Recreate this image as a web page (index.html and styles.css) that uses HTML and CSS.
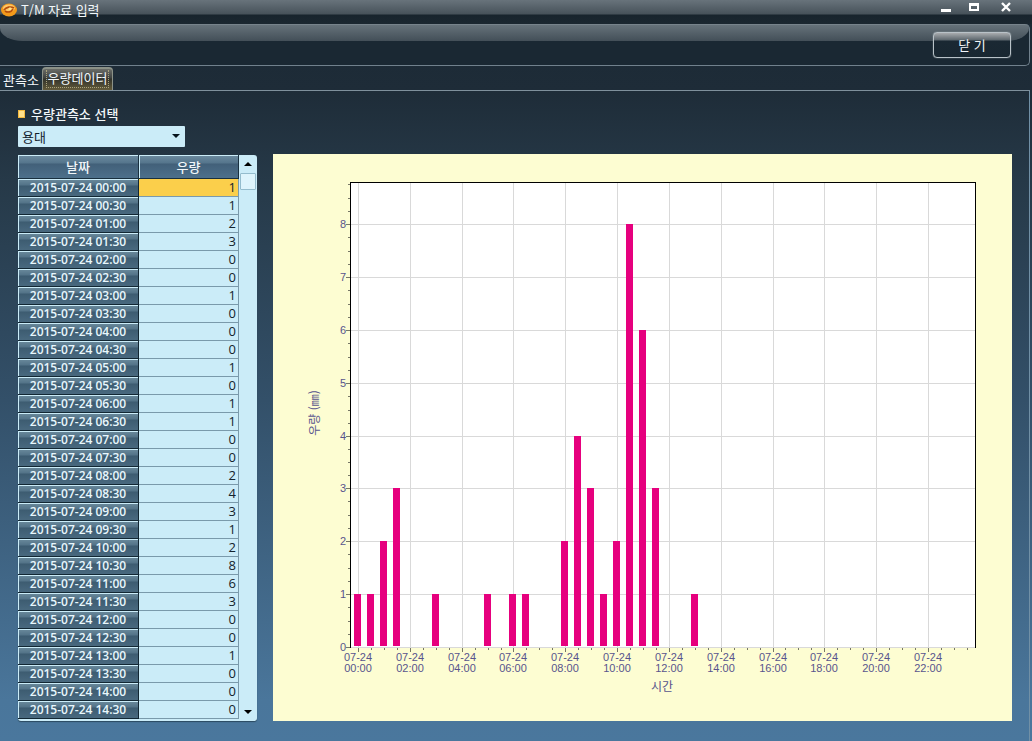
FILE: index.html
```html
<!DOCTYPE html>
<html lang="ko">
<head>
<meta charset="utf-8">
<title>T/M 자료 입력</title>
<link rel="stylesheet" href="styles.css">
</head>
<body>
<header class="titlebar">
  <svg class="logo" width="16" height="14" viewBox="0 0 16 14" aria-hidden="true">
    <ellipse cx="8" cy="7" rx="8" ry="6.5" fill="#f39a1b"/>
    <ellipse cx="8" cy="5" rx="6" ry="3.5" fill="#ffc867"/>
    <path d="M3 7c2-3 7-4 10-2M4 8c3 2 6 1 8-2" fill="none" stroke="#b54d0c" stroke-width="1.6"/>
    <circle cx="9" cy="6" r="1.4" fill="#ffe28a"/>
  </svg>
  <h1 class="title">T/M 자료 입력</h1>
  <div class="window-buttons">
    <button type="button" aria-label="최소화"><svg width="12" height="12" viewBox="0 0 12 12"><path d="M1 8h10v3H1z" fill="#fff"/></svg></button>
    <button type="button" aria-label="최대화"><svg width="12" height="12" viewBox="0 0 12 12"><path d="M1 2h10v8H1zM3 5v3h6V5z" fill="#fff" fill-rule="evenodd"/></svg></button>
    <button type="button" aria-label="창 닫기"><svg width="12" height="12" viewBox="0 0 12 12"><path d="M2 2l8 8M10 2l-8 8" stroke="#fff" stroke-width="2.4"/></svg></button>
  </div>
</header>
<div class="toolbar"><button type="button" class="close">닫 기</button></div>
<nav class="tabs" role="tablist">
  <button type="button" class="tab" role="tab" aria-selected="false">관측소</button>
  <button type="button" class="tab active" role="tab" aria-selected="true"><span>우량데이터</span></button>
</nav>
<main class="panel">
  <label class="caption" for="station">우량관측소 선택</label>
  <div class="station"><select id="station"><option>용대</option></select></div>
  <div class="content">
    <section class="grid">
      <table>
        <thead><tr><th scope="col">날짜</th><th scope="col">우량</th></tr></thead>
        <tbody>
          <tr class="selected"><th scope="row">2015-07-24 00:00</th><td>1</td></tr>
          <tr><th scope="row">2015-07-24 00:30</th><td>1</td></tr>
          <tr><th scope="row">2015-07-24 01:00</th><td>2</td></tr>
          <tr><th scope="row">2015-07-24 01:30</th><td>3</td></tr>
          <tr><th scope="row">2015-07-24 02:00</th><td>0</td></tr>
          <tr><th scope="row">2015-07-24 02:30</th><td>0</td></tr>
          <tr><th scope="row">2015-07-24 03:00</th><td>1</td></tr>
          <tr><th scope="row">2015-07-24 03:30</th><td>0</td></tr>
          <tr><th scope="row">2015-07-24 04:00</th><td>0</td></tr>
          <tr><th scope="row">2015-07-24 04:30</th><td>0</td></tr>
          <tr><th scope="row">2015-07-24 05:00</th><td>1</td></tr>
          <tr><th scope="row">2015-07-24 05:30</th><td>0</td></tr>
          <tr><th scope="row">2015-07-24 06:00</th><td>1</td></tr>
          <tr><th scope="row">2015-07-24 06:30</th><td>1</td></tr>
          <tr><th scope="row">2015-07-24 07:00</th><td>0</td></tr>
          <tr><th scope="row">2015-07-24 07:30</th><td>0</td></tr>
          <tr><th scope="row">2015-07-24 08:00</th><td>2</td></tr>
          <tr><th scope="row">2015-07-24 08:30</th><td>4</td></tr>
          <tr><th scope="row">2015-07-24 09:00</th><td>3</td></tr>
          <tr><th scope="row">2015-07-24 09:30</th><td>1</td></tr>
          <tr><th scope="row">2015-07-24 10:00</th><td>2</td></tr>
          <tr><th scope="row">2015-07-24 10:30</th><td>8</td></tr>
          <tr><th scope="row">2015-07-24 11:00</th><td>6</td></tr>
          <tr><th scope="row">2015-07-24 11:30</th><td>3</td></tr>
          <tr><th scope="row">2015-07-24 12:00</th><td>0</td></tr>
          <tr><th scope="row">2015-07-24 12:30</th><td>0</td></tr>
          <tr><th scope="row">2015-07-24 13:00</th><td>1</td></tr>
          <tr><th scope="row">2015-07-24 13:30</th><td>0</td></tr>
          <tr><th scope="row">2015-07-24 14:00</th><td>0</td></tr>
          <tr><th scope="row">2015-07-24 14:30</th><td>0</td></tr>
        </tbody>
      </table>
      <div class="scrollbar">
        <button type="button" aria-label="위로"><svg width="8" height="4" viewBox="0 0 8 4"><path d="M0 4l4-4 4 4z"/></svg></button>
        <div class="thumb"></div>
        <button type="button" class="down" aria-label="아래로"><svg width="8" height="4" viewBox="0 0 8 4"><path d="M0 0l4 4 4-4z"/></svg></button>
      </div>
    </section>
    <figure class="chart">
      <svg viewBox="0 0 739 567" role="img" aria-label="시간별 우량 (mm)">
        <rect x="77" y="28" width="626" height="465" fill="#fff"/>
        <path class="gridline" d="M85.5 29V493M137.5 29V493M189.5 29V493M240.5 29V493M292.5 29V493M344.5 29V493M396.5 29V493M448.5 29V493M500.5 29V493M551.5 29V493M603.5 29V493M655.5 29V493M78 70.5H702M78 123.5H702M78 176.5H702M78 229.5H702M78 282.5H702M78 334.5H702M78 387.5H702M78 440.5H702M78 493.5H702"/>
        <g class="bars">
          <rect x="81" y="440" width="7" height="52"/><rect x="94" y="440" width="7" height="52"/>
          <rect x="107" y="387" width="7" height="105"/><rect x="120" y="334" width="7" height="158"/>
          <rect x="159" y="440" width="7" height="52"/><rect x="211" y="440" width="7" height="52"/>
          <rect x="236" y="440" width="7" height="52"/><rect x="249" y="440" width="7" height="52"/>
          <rect x="288" y="387" width="7" height="105"/><rect x="301" y="282" width="7" height="210"/>
          <rect x="314" y="334" width="7" height="158"/><rect x="327" y="440" width="7" height="52"/>
          <rect x="340" y="387" width="7" height="105"/><rect x="353" y="70" width="7" height="422"/>
          <rect x="366" y="176" width="7" height="316"/><rect x="379" y="334" width="7" height="158"/>
          <rect x="418" y="440" width="7" height="52"/>
        </g>
        <path class="frame" d="M77.5 494V28.5H702.5V494"/>
        <path class="tick" d="M73 70.5h4M73 123.5h4M73 176.5h4M73 229.5h4M73 282.5h4M73 334.5h4M73 387.5h4M73 440.5h4M73 493.5h4M85.5 494v4M137.5 494v4M189.5 494v4M240.5 494v4M292.5 494v4M344.5 494v4M396.5 494v4M448.5 494v4M500.5 494v4M551.5 494v4M603.5 494v4M655.5 494v4"/>
        <path class="tick" d="M75 30.5h2M75 44.5h2M75 57.5h2M75 83.5h2M75 97.5h2M75 110.5h2M75 136.5h2M75 150.5h2M75 163.5h2M75 189.5h2M75 203.5h2M75 216.5h2M75 242.5h2M75 256.5h2M75 269.5h2M75 295.5h2M75 308.5h2M75 321.5h2M75 347.5h2M75 361.5h2M75 374.5h2M75 400.5h2M75 414.5h2M75 427.5h2M75 453.5h2M75 467.5h2M75 480.5h2"/>
        <path class="tick" d="M98.5 494v2M111.5 494v2M124.5 494v2M150.5 494v2M163.5 494v2M176.5 494v2M202.5 494v2M215.5 494v2M228.5 494v2M253.5 494v2M266.5 494v2M279.5 494v2M305.5 494v2M318.5 494v2M331.5 494v2M357.5 494v2M370.5 494v2M383.5 494v2M409.5 494v2M422.5 494v2M435.5 494v2M461.5 494v2M474.5 494v2M487.5 494v2M512.5 494v2M525.5 494v2M538.5 494v2M564.5 494v2M577.5 494v2M590.5 494v2M616.5 494v2M629.5 494v2M642.5 494v2M668.5 494v2M681.5 494v2M694.5 494v2"/>
        <g class="y-labels">
          <text x="73" y="74">8</text><text x="73" y="127">7</text><text x="73" y="180">6</text>
          <text x="73" y="233">5</text><text x="73" y="286">4</text><text x="73" y="338">3</text>
          <text x="73" y="391">2</text><text x="73" y="444">1</text><text x="73" y="497">0</text>
        </g>
        <g class="x-labels">
          <text x="85" y="507">07-24</text><text x="85" y="518">00:00</text>
          <text x="137" y="507">07-24</text><text x="137" y="518">02:00</text>
          <text x="189" y="507">07-24</text><text x="189" y="518">04:00</text>
          <text x="240" y="507">07-24</text><text x="240" y="518">06:00</text>
          <text x="292" y="507">07-24</text><text x="292" y="518">08:00</text>
          <text x="344" y="507">07-24</text><text x="344" y="518">10:00</text>
          <text x="396" y="507">07-24</text><text x="396" y="518">12:00</text>
          <text x="448" y="507">07-24</text><text x="448" y="518">14:00</text>
          <text x="500" y="507">07-24</text><text x="500" y="518">16:00</text>
          <text x="551" y="507">07-24</text><text x="551" y="518">18:00</text>
          <text x="603" y="507">07-24</text><text x="603" y="518">20:00</text>
          <text x="655" y="507">07-24</text><text x="655" y="518">22:00</text>
        </g>
        <text class="axis-title" x="389" y="537">시간</text>
        <text class="axis-title" transform="translate(46 259) rotate(-90)">우량 (㎜)</text>
      </svg>
    </figure>
  </div>
</main>
</body>
</html>
```

FILE: styles.css
```css
*, *::before { box-sizing: border-box; }

body {
  margin: 0;
  min-height: 100vh;
  display: flex;
  flex-direction: column;
  background: linear-gradient(#1b2934 0, #1e2c38 90px, #263948 180px, #335069 400px, #4a769b 700px, #4a779d 100%);
  color: #f2f7fa;
  font: 13px/16px "Noto Sans CJK KR", sans-serif;
}

button {
  margin: 0;
  padding: 0;
  border: 0;
  background: none;
  color: inherit;
  font: inherit;
}

svg { display: block; }

.titlebar {
  display: flex;
  align-items: center;
  height: 24px;
  padding: 0 20px 4px 1px;
  gap: 4px;
  background: linear-gradient(#68737b, #47525a 14px, #18242d 15px, #1b2730);
}

.title { flex: 1; margin: 0; font-size: 13px; font-weight: 400; }

.window-buttons { display: flex; gap: 16px; padding-bottom: 7px; }
.window-buttons button:last-child { padding-left: 4px; }

.toolbar {
  position: relative;
  display: flex;
  justify-content: flex-end;
  height: 42px;
  margin-right: 2px;
  padding: 8px 18px 0 0;
  border: solid #71818d;
  border-width: 0 1px 1px 0;
  border-radius: 0 5px 5px 0;
  background: #1a2833;
}

.toolbar::before {
  content: "";
  position: absolute;
  inset: 0 0 auto 0;
  height: 17px;
  border-top: 1px solid #77838b;
  border-radius: 0 5px 28px 28px / 0 5px 16px 16px;
  background: linear-gradient(#66727a, #434f58);
}

.close {
  position: relative;
  width: 78px;
  height: 26px;
  border: 1px solid #b9c2c8;
  border-radius: 4px;
  background: linear-gradient(#a8abae, #5d676e 7px, #1a2833 8px, #192731);
  box-shadow: 0 0 1px #d3dadd;
}

.tabs {
  display: flex;
  align-items: flex-end;
  height: 25px;
  margin-right: 2px;
  border-bottom: 1px solid #7f909c;
}

.tab {
  width: 42px;
  height: 22px;
  padding-top: 2px;
  background: #1f303c;
}

.active {
  width: 71px;
  height: 23px;
  padding: 0 3px 2px;
  border: 1px solid #8b9187;
  border-width: 2px 1px 0;
  border-radius: 4px 4px 0 0;
  background: linear-gradient(#6b6d68, #3d4140 9px, #32332b 10px, #635b3b);
}

.active span { display: block; height: 18px; border: 1px dotted #aaa37c; border-top: 0; }

.panel {
  flex: 1;
  display: flex;
  flex-direction: column;
  align-items: flex-start;
  margin-right: 2px;
  padding: 15px 17px 18px 18px;
  border-right: 1px solid #7190a6;
}

.caption { display: flex; align-items: center; gap: 6px; font-weight: 500; }

.caption::before {
  content: "";
  width: 7px;
  height: 8px;
  border: 1px solid #f3b83e;
  background: #ffe08a;
}

.station { position: relative; width: 167px; margin-top: 4px; }

.station select {
  display: block;
  width: 100%;
  height: 21px;
  padding: 0 4px;
  border: 0;
  border-radius: 1px;
  background: #cbecf8;
  color: #10202b;
  font: inherit;
  appearance: none;
}

.station::after {
  content: "";
  position: absolute;
  right: 5px;
  top: 8px;
  border: 4px solid transparent;
  border-top-color: #06141d;
  pointer-events: none;
}

.content {
  align-self: stretch;
  flex: 1;
  display: flex;
  align-items: flex-start;
  gap: 16px;
  margin-top: 7px;
}

.grid {
  display: flex;
  width: 239px;
  margin-top: 1px;
  padding-bottom: 2px;
  border-radius: 3px;
  background: #cbecf8;
  box-shadow: 0 1px 1px #2b4a61;
}

table { flex: 1; border-collapse: separate; border-spacing: 0; table-layout: fixed; }

thead th {
  height: 24px;
  padding: 0;
  border: solid #19303f;
  border-width: 0 1px 1px 0;
  background: linear-gradient(#6d8ca0, #55758c 8px, #426079 9px, #4d708b);
  box-shadow: inset 1px 1px #cbecf8;
  font-weight: 500;
}

thead th:first-child { width: 121px; }

tbody th {
  height: 18px;
  padding: 0;
  border: solid #122733;
  border-width: 0 1px 1px 0;
  background: linear-gradient(#6b8b9d, #537388 6px, #3d5c71 7px, #49697f);
  box-shadow: inset 1px 1px #cbecf8;
  color: #e8f7fd;
  font: 600 12px/17px "Open Sans", sans-serif;
}

td {
  height: 18px;
  padding: 0 2px 0 0;
  border: solid #7a9aab;
  border-width: 0 1px 1px 0;
  color: #13232d;
  font: 13px/17px "Open Sans", sans-serif;
  text-align: right;
}

.selected td { background: #fbcf4b; }

.scrollbar { width: 18px; display: flex; flex-direction: column; align-items: center; }
.scrollbar button { padding: 7px 0; }
.scrollbar .down { margin-top: auto; padding: 0 0 5px; }
.thumb { width: 16px; height: 17px; border: 1px solid #94bccd; border-radius: 1px; background: #def4fc; }

.chart { flex: 1; margin: 0; background: #fdfdd2; }
.chart svg { width: 100%; height: auto; }
.chart text { fill: #58548d; font: 11px "Liberation Sans", sans-serif; }
.chart .axis-title { font: 12px "Noto Sans CJK KR", sans-serif; text-anchor: middle; }
.chart path { fill: none; shape-rendering: crispEdges; }
.gridline { stroke: #d9d9d9; }
.frame { stroke: #000; }
.tick { stroke: #777766; }
.bars { fill: #e6007e; }
.y-labels { text-anchor: end; }
.x-labels { text-anchor: middle; }
```
